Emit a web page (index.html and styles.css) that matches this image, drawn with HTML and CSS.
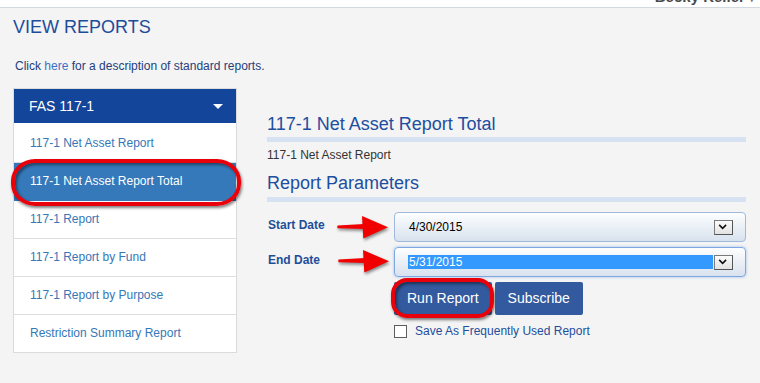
FILE: index.html
```html
<!DOCTYPE html>
<html lang="en">
<head>
<meta charset="utf-8">
<title>View Reports</title>
<link rel="stylesheet" href="styles.css">
</head>
<body>
<div class="topbar"><span class="user">Becky Keller <span class="user-caret">&#9662;</span></span></div>
<main class="page">
  <h1 class="page-title">VIEW REPORTS</h1>
  <p class="intro">Click <a href="#" class="intro-link">here</a> for a description of standard reports.</p>
  <div class="layout">
    <aside class="panel">
      <div class="panel-head"><span>FAS 117-1</span><span class="head-caret"></span></div>
      <ul class="report-list">
        <li class="report-item">117-1 Net Asset Report</li>
        <li class="report-item is-active">117-1 Net Asset Report Total<span class="callout callout-item"></span></li>
        <li class="report-item">117-1 Report</li>
        <li class="report-item">117-1 Report by Fund</li>
        <li class="report-item">117-1 Report by Purpose</li>
        <li class="report-item">Restriction Summary Report</li>
      </ul>
    </aside>
    <section class="content">
      <h2 class="section-title">117-1 Net Asset Report Total</h2>
      <p class="section-desc">117-1 Net Asset Report</p>
      <h2 class="section-title params">Report Parameters</h2>
      <div class="form">
        <div class="form-row">
          <label class="form-label">Start Date</label>
          <div class="date-select">
            <span class="date-value">4/30/2015</span>
            <span class="drop-btn"><svg viewBox="0 0 19 15" width="17" height="13"><path d="M4.5 4.5 L8.5 8.5 L12.5 4.5" fill="none" stroke="#111" stroke-width="1.8"/></svg></span>
          </div>
          <svg class="arrow" viewBox="0 0 52 23"><path d="M0.5 9.4 Q0 10.8 0.5 12.2 L27 13 L27 8 Z" fill="#f10000"/><path d="M25 0 L51 11.3 L26.3 22.5 Z" fill="#f10000"/></svg>
        </div>
        <div class="form-row">
          <label class="form-label">End Date</label>
          <div class="date-select is-focused">
            <span class="date-highlight">5/31/2015</span>
            <span class="drop-btn"><svg viewBox="0 0 19 15" width="17" height="13"><path d="M4.5 4.5 L8.5 8.5 L12.5 4.5" fill="none" stroke="#111" stroke-width="1.8"/></svg></span>
          </div>
          <svg class="arrow arrow-end" viewBox="0 0 52 23"><path d="M0.5 9.4 Q0 10.8 0.5 12.2 L27 13 L27 8 Z" fill="#f10000"/><path d="M25 0 L51 11.3 L26.3 22.5 Z" fill="#f10000"/></svg>
        </div>
        <div class="actions">
          <button class="btn" type="button">Run Report<span class="callout callout-btn"></span></button>
          <button class="btn" type="button">Subscribe</button>
        </div>
        <label class="save"><span class="checkbox"></span>Save As Frequently Used Report</label>
      </div>
    </section>
  </div>
</main>
</body>
</html>
```
FILE: styles.css
```css
html, body {
  margin: 0;
  background: #f4f4f4;
  font-family: "Liberation Sans", Arial, sans-serif;
}

.topbar {
  height: 7px;
  background: #fff;
  border-bottom: 1px solid #d2d9e0;
  display: flex;
  justify-content: flex-end;
  align-items: flex-end;
  overflow: hidden;
  padding-right: 5px;
}

.user {
  font-size: 15px;
  font-weight: bold;
  line-height: 17px;
  color: #4a4a4a;
  white-space: nowrap;
  flex-shrink: 0;
}

.user-caret {
  font-size: 11px;
  color: #777;
}

.page {
  padding: 8px 14px 0 13px;
  min-height: calc(100vh - 16px);
}

.page-title {
  margin: 0;
  font-size: 18px;
  line-height: 22px;
  font-weight: normal;
  color: #1d4c9b;
}

.intro {
  margin: 21px 0 15px;
  padding-left: 2px;
  font-size: 12px;
  line-height: 14px;
  color: #23407c;
}

.intro-link {
  color: #3d70c4;
  text-decoration: none;
}

.layout {
  display: flex;
  align-items: flex-start;
}

.panel {
  width: 224px;
  flex-shrink: 0;
  box-sizing: border-box;
  border: 1px solid #dbdbdb;
  background: #fff;
}

.panel-head {
  height: 34px;
  background: #13459a;
  color: #fff;
  font-size: 14px;
  display: flex;
  align-items: center;
  justify-content: space-between;
  padding: 0 13px 0 15px;
}

.head-caret {
  width: 0;
  height: 0;
  border-left: 5px solid transparent;
  border-right: 5px solid transparent;
  border-top: 5px solid #fff;
}

.report-list {
  list-style: none;
  margin: 0;
  padding: 2px 0 0;
}

.report-item {
  position: relative;
  height: 37px;
  line-height: 37px;
  border-bottom: 1px solid #dedede;
  padding-left: 16px;
  font-size: 12px;
  color: #3577b7;
}

.report-item:last-child {
  border-bottom: 0;
}

.report-item.is-active {
  background: #3579ba;
  border-bottom-color: #3579ba;
  color: #fff;
}

.callout {
  position: absolute;
  border: 4px solid #e8000b;
  box-shadow: 1px 2px 3px rgba(0, 0, 0, 0.5), inset 2px 2px 3px rgba(0, 0, 0, 0.45);
  pointer-events: none;
}

.callout-item {
  top: -4px;
  bottom: -6px;
  left: -3px;
  right: -5px;
  border-radius: 24px / 22px;
}

.callout-btn {
  top: -4px;
  bottom: -3px;
  left: -3px;
  right: -2px;
  border-radius: 16px;
}

.content {
  flex: 1;
  margin-left: 30px;
  padding-top: 25px;
}

.section-title {
  margin: 0;
  font-size: 18px;
  line-height: 22px;
  font-weight: normal;
  color: #1d4ea0;
  padding-bottom: 2px;
  border-bottom: 5px solid #d6e1f1;
}

.section-title.params {
  margin-top: 10px;
  padding-bottom: 3px;
}

.section-desc {
  margin: 6px 0 0;
  font-size: 12px;
  line-height: 14px;
  color: #333;
}

.form {
  margin-top: 10px;
}

.form-row {
  position: relative;
  display: flex;
  align-items: flex-start;
  margin-bottom: 5px;
}

.form-label {
  width: 126px;
  flex-shrink: 0;
  padding: 6px 0 0 1px;
  font-size: 12px;
  line-height: 14px;
  font-weight: bold;
  color: #1f4e98;
}

.date-select {
  flex: 1;
  height: 30px;
  box-sizing: border-box;
  border: 1px solid #9fb9dc;
  border-radius: 4px;
  background: linear-gradient(#fdfeff, #d8e2ee);
  display: flex;
  align-items: center;
  padding: 0 12px 0 14px;
  font-size: 12px;
  color: #000;
}

.date-select.is-focused {
  border-color: #7fa8e0;
  box-shadow: 0 0 3px rgba(80, 140, 230, 0.55);
  padding-left: 13px;
}

.date-highlight {
  flex: 1;
  height: 14px;
  line-height: 14px;
  padding-left: 1px;
  margin-right: 1px;
  background: #3399ff;
  color: #fff;
}

.drop-btn {
  margin-left: auto;
  width: 19px;
  height: 15px;
  box-sizing: border-box;
  border: 1px solid #7a7a7a;
  border-right-color: #555;
  border-bottom-color: #555;
  background: linear-gradient(#fbfbfb, #e3e3e3);
  display: flex;
  align-items: center;
  justify-content: center;
  flex-shrink: 0;
}

.date-highlight + .drop-btn {
  margin-left: 0;
}

.arrow {
  position: absolute;
  left: 70px;
  top: 4px;
  width: 52px;
  height: 23px;
  filter: drop-shadow(1px 2px 1.5px rgba(0, 0, 0, 0.45));
}

.arrow.arrow-end {
  left: 71px;
  top: 3px;
}

.actions {
  display: flex;
  gap: 3px;
  margin-left: 127px;
}

.btn {
  position: relative;
  height: 33px;
  padding: 0 13px;
  border: 0;
  border-radius: 2px;
  background: #335a9e;
  color: #fff;
  font-family: "Liberation Sans", Arial, sans-serif;
  font-size: 14px;
  line-height: 33px;
}

.save {
  display: flex;
  align-items: center;
  gap: 8px;
  margin: 9px 0 0 127px;
  font-size: 12px;
  line-height: 14px;
  color: #1f4e9c;
}

.checkbox {
  width: 13px;
  height: 13px;
  box-sizing: border-box;
  border: 1px solid #5d5d5d;
  background: #fff;
}
```
